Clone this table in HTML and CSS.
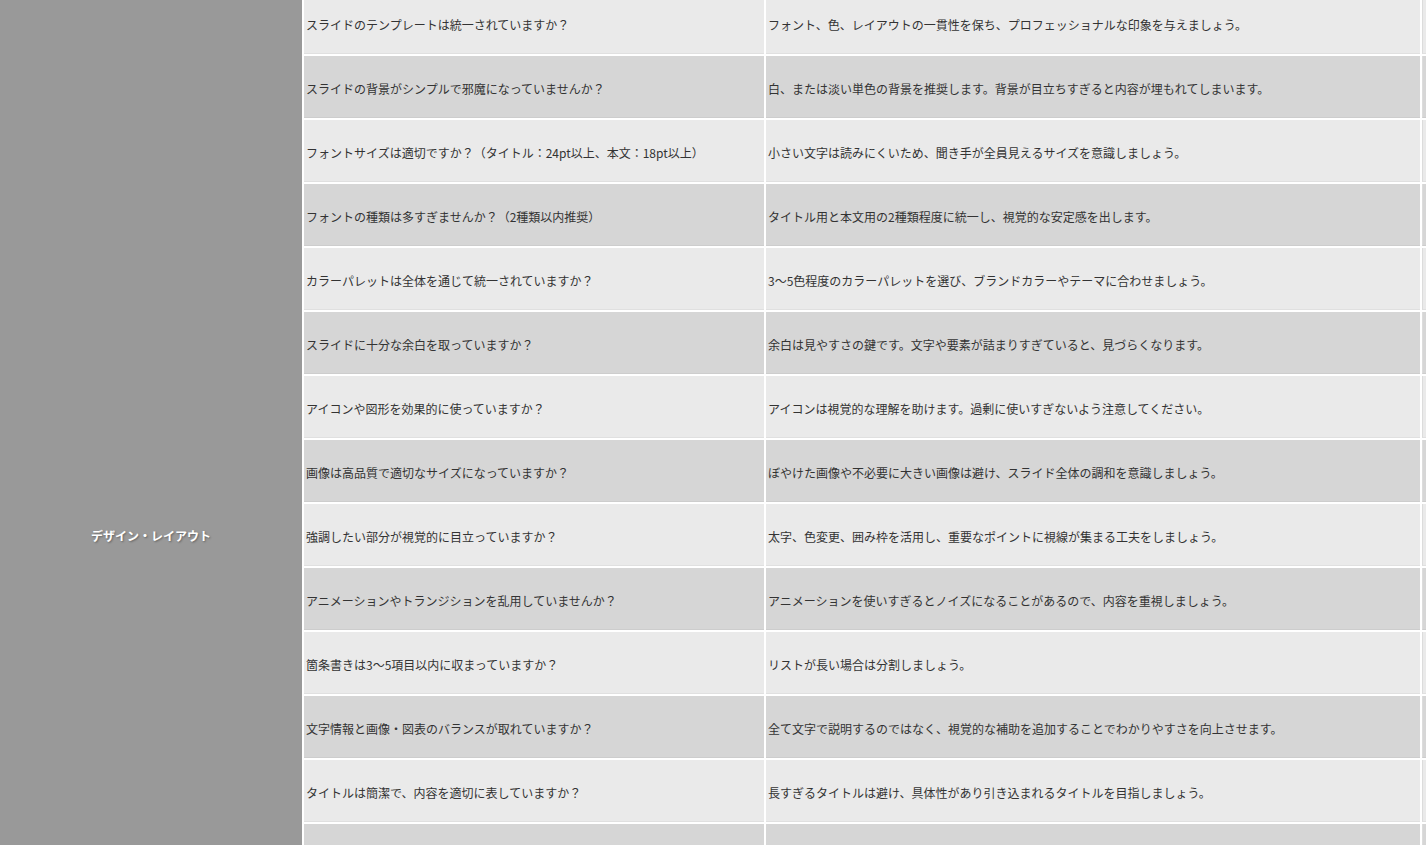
FILE: index.html
```html
<!DOCTYPE html>
<html lang="ja">
<head>
<meta charset="utf-8">
<title>チェックリスト</title>
<link rel="stylesheet" href="styles.css">
</head>
<body>
<table class="sheet">
  <colgroup>
    <col class="c-cat"><col class="c-q"><col class="c-tip"><col class="c-extra">
  </colgroup>
  <tbody>
    <tr class="odd">
      <td class="cat" rowspan="17">デザイン・レイアウト</td>
      <td>スライドのテンプレートは統一されていますか？</td>
      <td>フォント、色、レイアウトの一貫性を保ち、プロフェッショナルな印象を与えましょう。</td>
      <td class="extra"></td>
    </tr>
    <tr class="even">
      <td>スライドの背景がシンプルで邪魔になっていませんか？</td>
      <td>白、または淡い単色の背景を推奨します。背景が目立ちすぎると内容が埋もれてしまいます。</td>
      <td class="extra"></td>
    </tr>
    <tr class="odd">
      <td>フォントサイズは適切ですか？（タイトル：24pt以上、本文：18pt以上）</td>
      <td>小さい文字は読みにくいため、聞き手が全員見えるサイズを意識しましょう。</td>
      <td class="extra"></td>
    </tr>
    <tr class="even">
      <td>フォントの種類は多すぎませんか？（2種類以内推奨）</td>
      <td>タイトル用と本文用の2種類程度に統一し、視覚的な安定感を出します。</td>
      <td class="extra"></td>
    </tr>
    <tr class="odd">
      <td>カラーパレットは全体を通じて統一されていますか？</td>
      <td>3〜5色程度のカラーパレットを選び、ブランドカラーやテーマに合わせましょう。</td>
      <td class="extra"></td>
    </tr>
    <tr class="even">
      <td>スライドに十分な余白を取っていますか？</td>
      <td>余白は見やすさの鍵です。文字や要素が詰まりすぎていると、見づらくなります。</td>
      <td class="extra"></td>
    </tr>
    <tr class="odd">
      <td>アイコンや図形を効果的に使っていますか？</td>
      <td>アイコンは視覚的な理解を助けます。過剰に使いすぎないよう注意してください。</td>
      <td class="extra"></td>
    </tr>
    <tr class="even">
      <td>画像は高品質で適切なサイズになっていますか？</td>
      <td>ぼやけた画像や不必要に大きい画像は避け、スライド全体の調和を意識しましょう。</td>
      <td class="extra"></td>
    </tr>
    <tr class="odd">
      <td>強調したい部分が視覚的に目立っていますか？</td>
      <td>太字、色変更、囲み枠を活用し、重要なポイントに視線が集まる工夫をしましょう。</td>
      <td class="extra"></td>
    </tr>
    <tr class="even">
      <td>アニメーションやトランジションを乱用していませんか？</td>
      <td>アニメーションを使いすぎるとノイズになることがあるので、内容を重視しましょう。</td>
      <td class="extra"></td>
    </tr>
    <tr class="odd">
      <td>箇条書きは3〜5項目以内に収まっていますか？</td>
      <td>リストが長い場合は分割しましょう。</td>
      <td class="extra"></td>
    </tr>
    <tr class="even">
      <td>文字情報と画像・図表のバランスが取れていますか？</td>
      <td>全て文字で説明するのではなく、視覚的な補助を追加することでわかりやすさを向上させます。</td>
      <td class="extra"></td>
    </tr>
    <tr class="odd">
      <td>タイトルは簡潔で、内容を適切に表していますか？</td>
      <td>長すぎるタイトルは避け、具体性があり引き込まれるタイトルを目指しましょう。</td>
      <td class="extra"></td>
    </tr>
    <tr class="even"><td></td><td></td><td class="extra"></td></tr>
    <tr class="odd"><td></td><td></td><td class="extra"></td></tr>
    <tr class="even"><td></td><td></td><td class="extra"></td></tr>
    <tr class="odd"><td></td><td></td><td class="extra"></td></tr>
  </tbody>
</table>
</body>
</html>
```

FILE: styles.css
```css
html, body {
  margin: 0;
  padding: 0;
  overflow: hidden;
  background: #ffffff;
}

.sheet {
  border-collapse: separate;
  border-spacing: 2px;
  table-layout: fixed;
  width: 1500px;
  margin: -10px 0 0 -2px;
  font-family: "Noto Sans CJK JP", "Noto Sans", sans-serif;
  font-size: 12px;
  color: #333333;
}

.c-cat { width: 302px; }
.c-q { width: 460px; }
.c-tip { width: 654px; }
.c-extra { width: 76px; }

.sheet td {
  height: 62px;
  padding: 3px 2px 0;
  box-sizing: border-box;
  vertical-align: middle;
  white-space: nowrap;
  overflow: hidden;
  border-bottom: 1px solid rgba(0, 0, 0, 0.04);
}

.sheet tr.odd td { background: #eaeaea; }
.sheet tr.even td { background: #d6d6d6; }

.sheet tr td.extra {
  border-left: 1px solid #dcdcdc;
}

.sheet tr td.cat {
  background: #999999;
  color: #ffffff;
  font-weight: bold;
  text-align: center;
  text-shadow: 1px 1px 2px rgba(0, 0, 0, 0.35);
  border-bottom: none;
  padding-top: 0;
}
```
